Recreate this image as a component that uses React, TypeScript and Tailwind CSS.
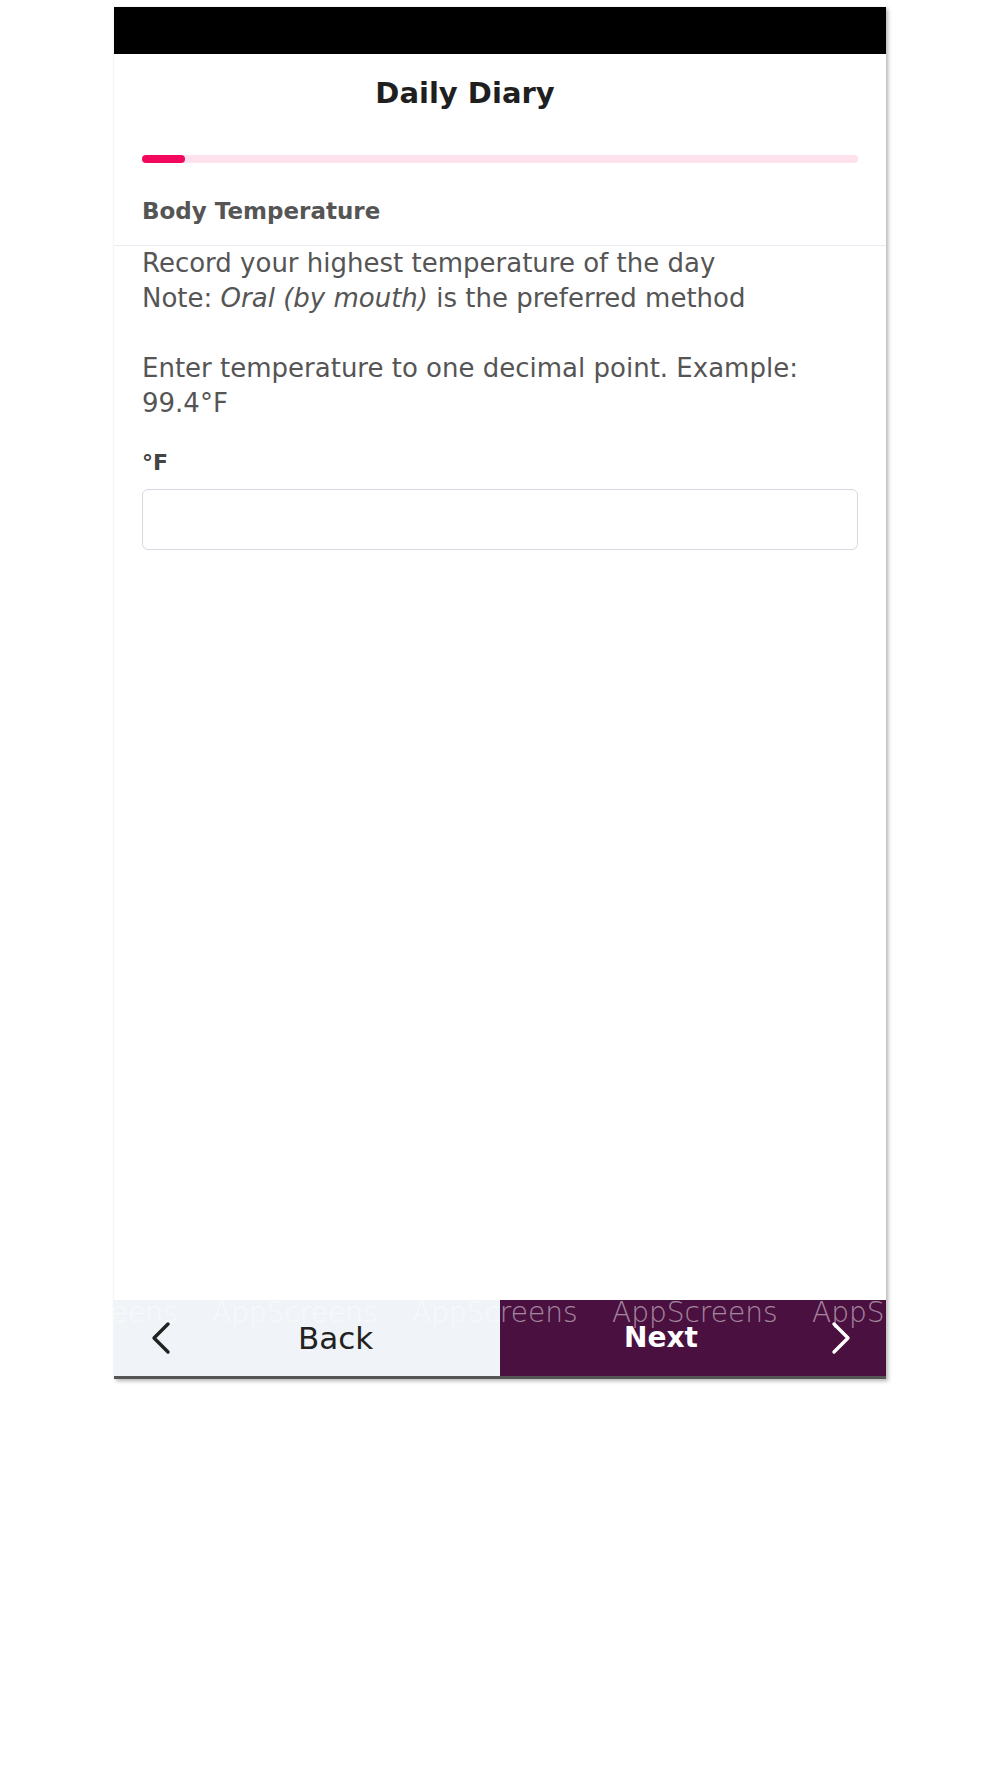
import React from "react";

const font = "font-['DejaVu_Sans',sans-serif]";

function ChevronLeft({ className }: { className?: string }) {
  return (
    <svg viewBox="0 0 22 34" width="22" height="34" className={className}>
      <polyline points="18,3 4,17 18,31" fill="none" stroke="currentColor" strokeWidth="3.4" strokeLinecap="round" strokeLinejoin="round" />
    </svg>
  );
}

function ChevronRight({ className }: { className?: string }) {
  return (
    <svg viewBox="0 0 22 34" width="22" height="34" className={className}>
      <polyline points="4,3 18,17 4,31" fill="none" stroke="currentColor" strokeWidth="3.4" strokeLinecap="round" strokeLinejoin="round" />
    </svg>
  );
}

export default function App() {
  const marks = [-102, 98, 298, 498, 698];
  return (
    <div className={`min-h-[1778px] w-[1000px] bg-white ${font}`}>
      <div className="pt-[7px] pl-[114px]">
        <div className="flex h-[1372px] w-[772px] flex-col bg-white shadow-[2px_2px_4px_rgba(0,0,0,0.3)]">
          <div className="h-[47px] bg-black" />
          <div className="flex flex-1 flex-col">
            <div className="flex h-[78px] items-center justify-center pr-[70px]">
              <h1 className="text-[29px] font-bold leading-none text-[#1f1f1f]">Daily Diary</h1>
            </div>
            <div className="mx-[28px] mt-[23px] h-[8px] rounded-full bg-[#fde2ee]">
              <div className="h-full w-[43px] rounded-full bg-[#f2085e]" />
            </div>
            <div className="border-b border-[#e8eef3] px-[28px] pt-[33px] pb-[19px]">
              <div className="text-[23px] font-bold leading-[30px] text-[#555]">Body Temperature</div>
            </div>
            <div className="px-[28px] text-[26px] leading-[35px] text-[#555]">
              <p>Record your highest temperature of the day</p>
              <p>
                Note: <em>Oral (by mouth)</em> is the preferred method
              </p>
              <p className="mt-[35px]">
                Enter temperature to one decimal point. Example:
                <br />
                99.4°F
              </p>
              <div className="mt-[27px] text-[22px] font-bold leading-[30px] text-[#444]">°F</div>
              <div className="mt-[11px] h-[61px] rounded-[6px] border-[1.5px] border-[#d5dbe1] bg-white" />
            </div>
          </div>
          <div className="relative flex h-[79px] border-b-[3px] border-[#555]">
            <div className="flex w-1/2 items-center bg-[#f0f4f8] pl-[36px] text-[#222]">
              <ChevronLeft />
              <span className="ml-[126px] text-[31px] leading-none">Back</span>
            </div>
            <div className="flex w-1/2 items-center bg-[#4a1040] pl-[124px] text-white">
              <span className="text-[28px] font-bold leading-none">Next</span>
              <ChevronRight className="ml-[132px]" />
            </div>
            <div className="pointer-events-none absolute inset-0 overflow-hidden">
              {marks.map((x) => (
                <span
                  key={x}
                  className="absolute top-[-1px] text-[28px] font-extralight leading-[28px] whitespace-nowrap text-white/50"
                  style={{ left: x }}
                >
                  AppScreens
                </span>
              ))}
            </div>
          </div>
        </div>
      </div>
    </div>
  );
}
